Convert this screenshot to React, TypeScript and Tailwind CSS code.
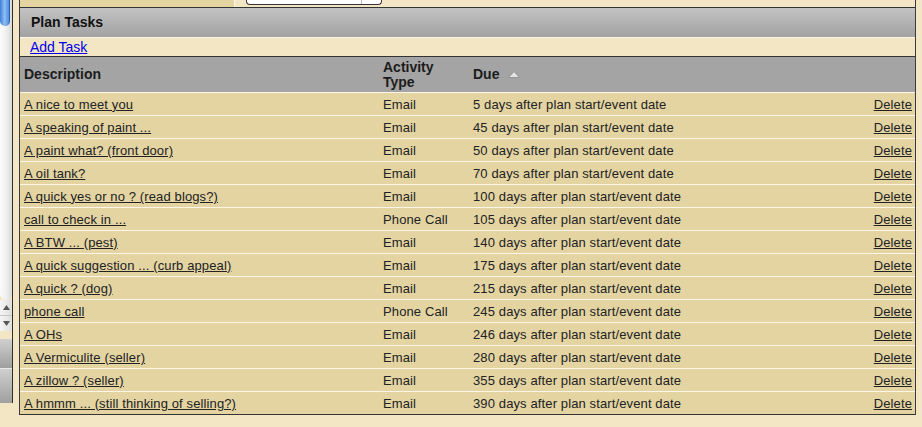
import React from "react";

const rows: [string, string, number][] = [
  ["A nice to meet you", "Email", 5],
  ["A speaking of paint ...", "Email", 45],
  ["A paint what? (front door)", "Email", 50],
  ["A oil tank?", "Email", 70],
  ["A quick yes or no ? (read blogs?)", "Email", 100],
  ["call to check in ...", "Phone Call", 105],
  ["A BTW ... (pest)", "Email", 140],
  ["A quick suggestion ... (curb appeal)", "Email", 175],
  ["A quick ? (dog)", "Email", 215],
  ["phone call", "Phone Call", 245],
  ["A OHs", "Email", 246],
  ["A Vermiculite (seller)", "Email", 280],
  ["A zillow ? (seller)", "Email", 355],
  ["A hmmm ... (still thinking of selling?)", "Email", 390],
];

function Scrollbar() {
  return (
    <div className="w-[13px] h-[403px] border-r border-[#2e2e2e] flex flex-col shrink-0">
      <div className="h-[300px] flex flex-col bg-gradient-to-r from-[#fbfbfb] via-[#f0f0f0] to-[#d9d9d9] rounded-b-[6px]">
        <div className="h-[26px] w-[10px] rounded-b-[5px] bg-gradient-to-r from-[#3f7fd9] via-[#8dbdf2] to-[#4f8ee0] border-r border-[#2e62b0]" />
      </div>
      <div className="h-[16px] flex items-center justify-center bg-gradient-to-r from-[#f6f6f6] to-[#dedede] border-b border-[#c8c8c8]">
        <svg width="7" height="5" viewBox="0 0 7 5"><path d="M3.5 0 L7 5 L0 5 Z" fill="#555" /></svg>
      </div>
      <div className="h-[15px] flex items-center justify-center bg-gradient-to-r from-[#f6f6f6] to-[#dedede]">
        <svg width="7" height="5" viewBox="0 0 7 5"><path d="M0 0 L7 0 L3.5 5 Z" fill="#555" /></svg>
      </div>
      <div className="h-[8px]" />
      <div className="h-[30px] bg-gradient-to-b from-[#d0d0d0] to-[#9f9f9f] border-b border-[#e8e8e8]" />
      <div className="flex-1 bg-gradient-to-b from-[#cfcfcf] to-[#a0a0a0]" />
    </div>
  );
}

export default function App() {
  return (
    <div className="w-[922px] h-[427px] bg-[#f2e6c5] flex overflow-hidden font-['Liberation_Sans',Arial,sans-serif] text-[#222]">
      <Scrollbar />
      <div className="w-[6px] shrink-0" />
      <div className="w-[897px] h-[415px] border-x border-[#3a3a3a] flex flex-col shrink-0">
        {/* top strip */}
        <div className="h-[7px] flex shrink-0">
          <div className="w-[214px] bg-[#e3d4a2]" />
          <div className="w-px bg-[#fbf6e8]" />
          <div className="flex-1 bg-[#f2e6c5]">
            <div className="ml-[11px] w-[136px] h-[5px] bg-white border border-t-0 border-[#333] rounded-b-[4px] flex">
              <div className="w-[115px] border-r border-[#bbb]" />
            </div>
          </div>
        </div>
        {/* title bar */}
        <div className="h-[31px] border-t border-b border-t-[#333] border-b-[#fbf6e8] bg-gradient-to-b from-[#c3c3c3] to-[#a2a2a2] flex items-center pl-[11px] shrink-0">
          <span className="text-[14px] font-bold text-[#111]">Plan Tasks</span>
        </div>
        {/* add task */}
        <div className="h-[18px] flex items-center pl-[10px] bg-[#f2e6c5] shrink-0">
          <a href="#" className="text-[14px] leading-[16px] text-[#0000ee] underline">Add Task</a>
        </div>
        {/* table header */}
        <div className="h-[36px] border-t border-[#333] bg-[#a4a4a4] flex items-center text-[14px] font-bold text-[#1c1c1c] shrink-0">
          <div className="w-[359px] pl-[4px]">Description</div>
          <div className="w-[90px] pl-[4px] leading-[15px]">Activity<br />Type</div>
          <div className="flex-1 pl-[4px] flex items-center">
            <span>Due</span>
            <svg className="ml-[9px]" width="12" height="7" viewBox="0 0 12 7">
              <path d="M6 0.5 L11.5 6.5 L0.5 6.5 Z" fill="#e2e2e2" stroke="#8a8a8a" strokeWidth="0.8" />
            </svg>
          </div>
        </div>
        {/* rows */}
        <div className="flex flex-col border-b border-[#333] bg-[#e3d4a2]">
          {rows.map(([desc, type, days], i) => (
            <div key={i} className="h-[23px] border-t border-[#fbf6e8] flex items-center pt-px text-[13px] tracking-[0.12px]">
              <div className="w-[359px] pl-[4px]">
                <a href="#" className="underline text-[#222]">{desc}</a>
              </div>
              <div className="w-[90px] pl-[4px]">{type}</div>
              <div className="flex-1 pl-[4px]">{days} days after plan start/event date</div>
              <div className="pr-[3px]">
                <a href="#" className="underline text-[#222]">Delete</a>
              </div>
            </div>
          ))}
        </div>
      </div>
    </div>
  );
}
